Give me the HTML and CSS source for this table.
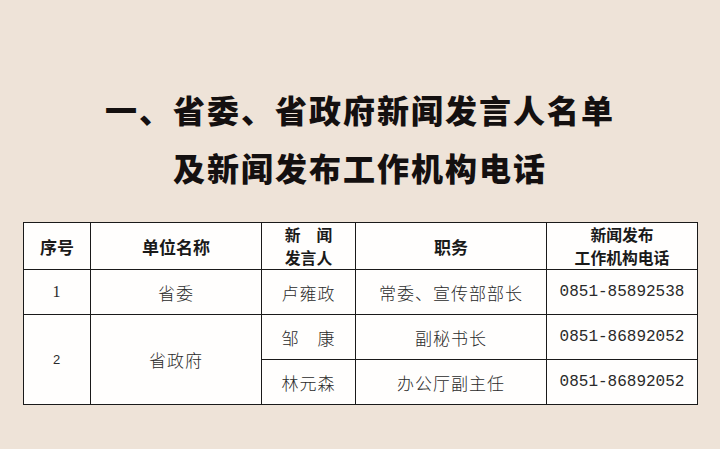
FILE: index.html
```html
<!DOCTYPE html>
<html lang="zh">
<head>
<meta charset="utf-8">
<link rel="stylesheet" href="styles.css">
</head>
<body>
<div class="page">
  <h1 class="title">
    <span class="line">一、省委、省政府新闻发言人名单</span>
    <span class="line">及新闻发布工作机构电话</span>
  </h1>
  <table class="list">
    <colgroup>
      <col class="c1"><col class="c2"><col class="c3"><col class="c4"><col class="c5">
    </colgroup>
    <thead>
      <tr>
        <th>序号</th>
        <th>单位名称</th>
        <th class="two"><span class="ln">新　闻</span><span class="ln">发言人</span></th>
        <th>职务</th>
        <th class="two"><span class="ln">新闻发布</span><span class="ln">工作机构电话</span></th>
      </tr>
    </thead>
    <tbody>
      <tr>
        <td class="num">1</td>
        <td>省委</td>
        <td>卢雍政</td>
        <td>常委、宣传部部长</td>
        <td class="tel">0851-85892538</td>
      </tr>
      <tr>
        <td class="num small" rowspan="2">2</td>
        <td rowspan="2">省政府</td>
        <td>邹　康</td>
        <td>副秘书长</td>
        <td class="tel">0851-86892052</td>
      </tr>
      <tr>
        <td>林元森</td>
        <td>办公厅副主任</td>
        <td class="tel">0851-86892052</td>
      </tr>
    </tbody>
  </table>
</div>
</body>
</html>
```
FILE: styles.css
```css
html, body {
  margin: 0;
  padding: 0;
  background: #eee3d8;
}
.page {
  width: 720px;
  height: 449px;
  overflow: hidden;
  padding-top: 86px;
  box-sizing: border-box;
}
.title {
  margin: 0;
  font-family: "Noto Sans CJK SC", sans-serif;
  font-weight: 900;
  font-size: 32px;
  color: #141010;
  text-align: center;
  line-height: 58px;
  letter-spacing: 2px;
}
.title .line {
  display: block;
  height: 58px;
}
.title .line:first-child {
  margin-top: -6px;
}
.list {
  margin: 26px 0 0 23px;
  width: 674px;
  border-collapse: collapse;
  background: #fffefd;
  font-family: "Noto Sans CJK SC", sans-serif;
  color: #2a2a2a;
  table-layout: fixed;
}
.c1 { width: 67px; }
.c2 { width: 171px; }
.c3 { width: 94px; }
.c4 { width: 191px; }
.c5 { width: 151px; }
.list th, .list td {
  border: 1.5px solid #1a1a1a;
  text-align: center;
  vertical-align: middle;
  padding: 0;
  height: 44px;
}
.list th {
  font-size: 17px;
  font-weight: 700;
  color: #1a1a1a;
  line-height: 23px;
  height: 46px;
}
.list th .ln {
  display: block;
  height: 23px;
  line-height: 23px;
  font-size: 15.8px;
}
.list td {
  font-size: 17px;
  font-weight: 300;
  letter-spacing: 1px;
}
.list td.num {
  font-family: "Liberation Serif", serif;
  font-size: 16px;
}
.list td.small {
  font-size: 13px;
  font-family: "Liberation Sans", sans-serif;
}
.list td.tel {
  font-family: "Liberation Mono", monospace;
  font-size: 16px;
  letter-spacing: 0;
}
```
